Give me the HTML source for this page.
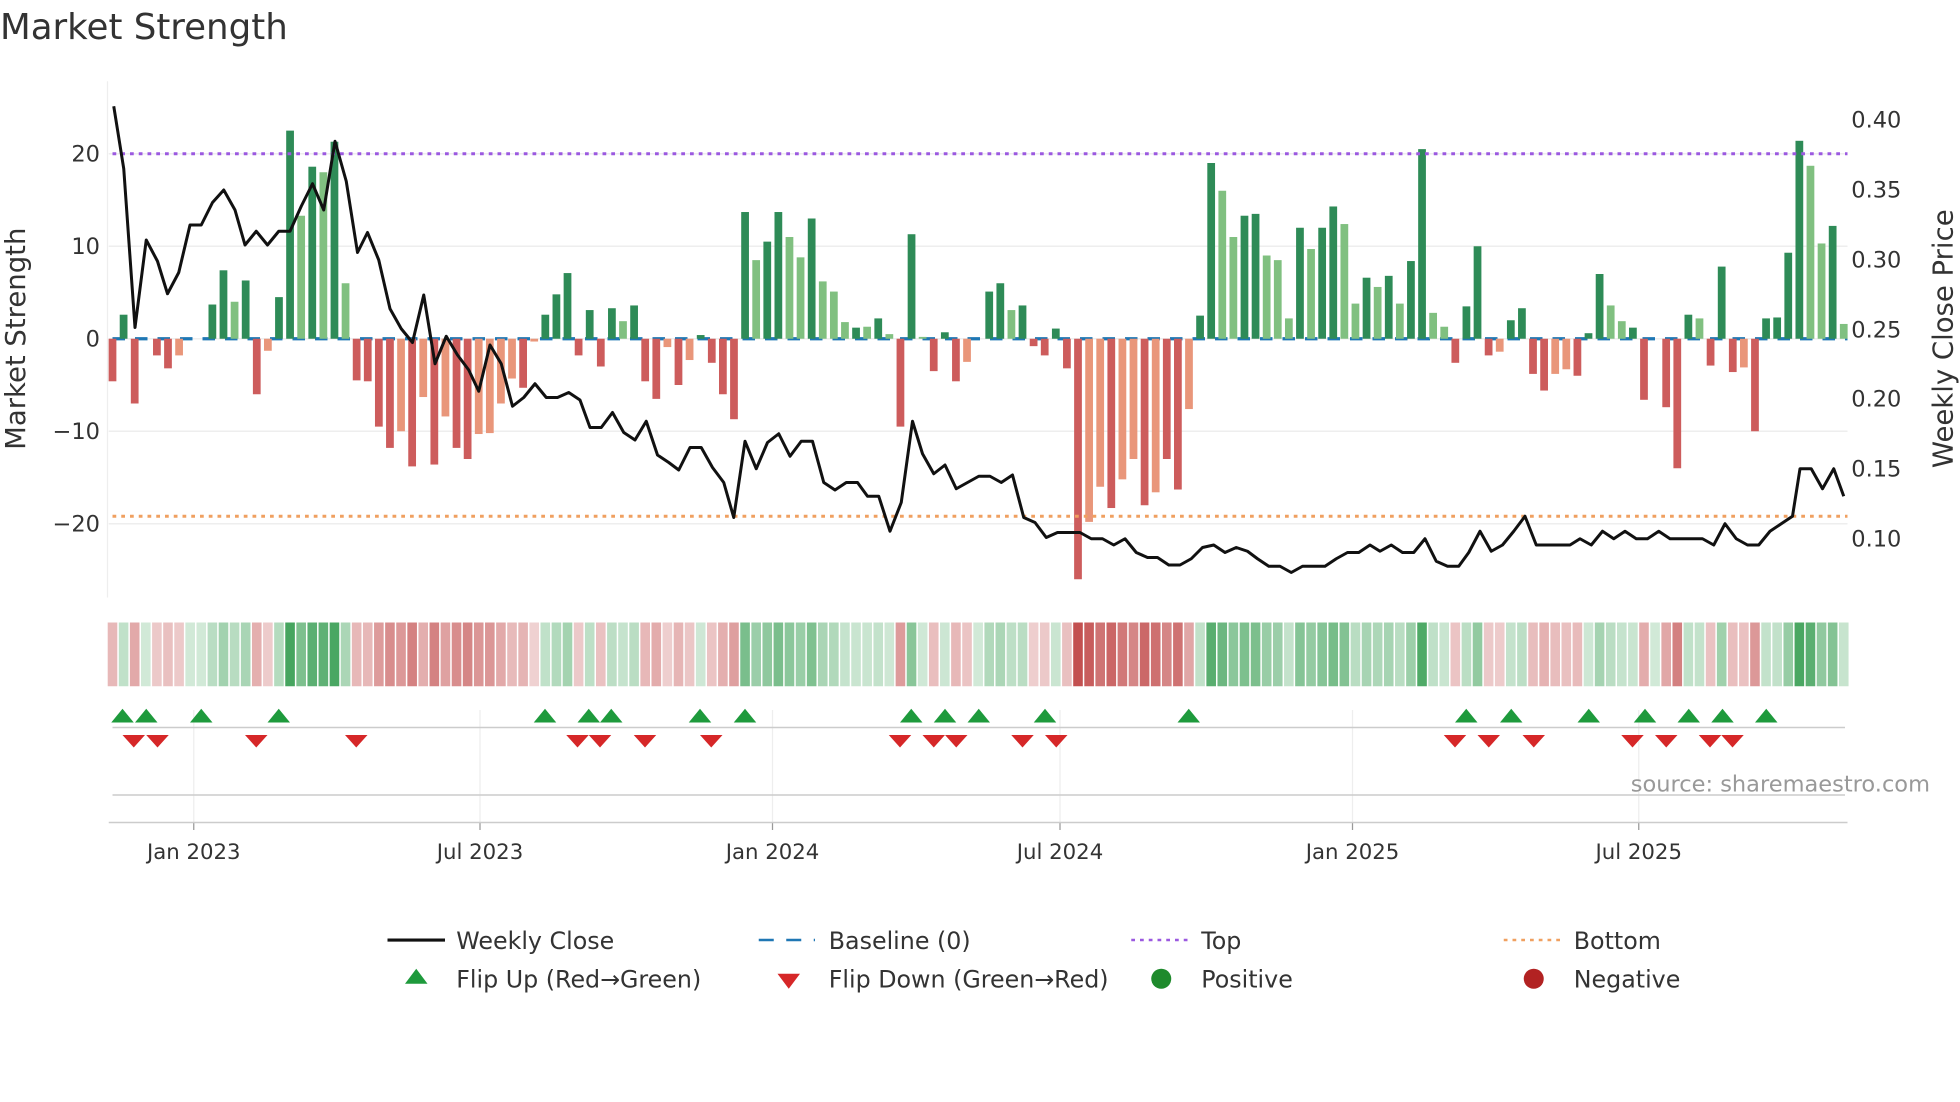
<!DOCTYPE html>
<html><head><meta charset="utf-8"><style>
html,body{margin:0;padding:0;background:#fff;}
svg{display:block;font-family:"DejaVu Sans","Liberation Sans",sans-serif;}
</style></head><body>
<svg id="s" width="1960" height="1102" viewBox="0 0 1568 881.6" xmlns="http://www.w3.org/2000/svg">
<rect width="1568" height="882" fill="#fff"/>
<text x="0" y="31" font-size="28.5" fill="#333">Market Strength</text>
<g id="grid"></g>
<g id="bars"></g>
<g id="rest"></g>
</svg>
<script>
const NS="http://www.w3.org/2000/svg";
function el(p,t,a,txt){const e=document.createElementNS(NS,t);for(const k in a)e.setAttribute(k,a[k]);if(txt!==undefined)e.textContent=txt;p.appendChild(e);return e;}
const S=document.getElementById('s'),G=document.getElementById('grid'),B=document.getElementById('bars'),R=document.getElementById('rest');
const y0=271,k=7.4;
[20,10,0,-10,-20].forEach(v=>{const y=y0-v*k;el(G,'line',{x1:87,x2:1478,y1:y,y2:y,stroke:'#eeeeee','stroke-width':1.2});
 el(G,'text',{x:80,y:y+6,'font-size':18,fill:'#333','text-anchor':'end'},(v<0?'\u2212':'')+Math.abs(v));});
el(G,'line',{x1:86,x2:86,y1:65,y2:478,stroke:'#eee'});
[[0.40,95],[0.35,151],[0.30,207],[0.25,263],[0.20,318],[0.15,374],[0.10,430]].forEach(([v,y])=>el(G,'text',{x:1481,y:y+7,'font-size':18,fill:'#333'},v.toFixed(2)));
el(G,'text',{x:0,y:0,'font-size':22,fill:'#333','text-anchor':'middle',transform:'translate(20,271) rotate(-90)'},'Market Strength');
el(G,'text',{x:0,y:0,'font-size':22,fill:'#333','text-anchor':'middle',transform:'translate(1562,271) rotate(-90)'},'Weekly Close Price');
el(G,'line',{x1:90,x2:1478,y1:y0,y2:y0,stroke:'#1f77b4','stroke-width':2.6,'stroke-dasharray':'10 8'});
const D="R-4.6 G2.6 R-7 Z0 R-1.8 R-3.2 r-1.8 Z0 Z0 G3.7 G7.4 g4 G6.3 R-6 r-1.3 G4.5 G22.5 g13.3 G18.6 g18 G21.3 g6 R-4.5 R-4.6 R-9.5 R-11.8 r-10 R-13.8 r-6.3 R-13.6 r-8.4 R-11.8 R-13 r-10.3 r-10.2 r-7 r-4.3 R-5.3 r-0.3 G2.6 G4.8 G7.1 R-1.8 G3.1 R-3 G3.3 g1.9 G3.6 R-4.6 R-6.5 r-0.9 R-5 r-2.3 G0.4 R-2.6 R-6 R-8.7 G13.7 g8.5 G10.5 G13.7 g11 g8.8 G13 g6.2 g5.1 g1.8 G1.2 g1.3 G2.2 g0.5 R-9.5 G11.3 g0.2 R-3.5 G0.7 R-4.6 r-2.5 Z0 G5.1 G6 g3.1 G3.6 R-0.8 R-1.8 G1.1 R-3.2 R-26 r-19.8 r-16 R-18.3 r-15.2 r-13 R-18 r-16.6 R-13 R-16.3 r-7.6 G2.5 G19 g16 g11 G13.3 G13.5 g9 g8.5 g2.2 G12 g9.7 G12 G14.3 g12.4 g3.8 G6.6 g5.6 G6.8 g3.8 G8.4 G20.5 g2.8 g1.3 R-2.6 G3.5 G10 R-1.8 r-1.4 G2 G3.3 R-3.8 R-5.6 r-3.8 r-3.3 R-4 G0.6 G7 g3.6 g1.9 G1.2 R-6.6 Z0 R-7.4 R-14 G2.6 g2.2 R-2.9 G7.8 R-3.6 r-3.1 R-10 G2.2 G2.3 G9.3 G21.4 g18.7 g10.3 G12.2 g1.6".split(' ');
const col={G:'#2e8b57',g:'#80c080',R:'#cd5c5c',r:'#e9967a'};
const N=D.length,step=(1475-90)/(N-1),bw=6.2;
D.forEach((s,i)=>{const c=s[0],v=parseFloat(s.slice(1));const x=90+i*step;
 if(c!=='Z'&&v!==0){const h=Math.abs(v)*k;el(B,'rect',{x:x-bw/2,y:v>0?y0-h:y0,width:bw,height:h,fill:col[c]});}
 let f;const a=Math.min(Math.abs(v)/22,1);const t=0.25+0.75*a;
 if(v>=0){f=`rgb(${Math.round(255-(255-70)*t)},${Math.round(255-(255-165)*t)},${Math.round(255-(255-95)*t)})`;}
 else{f=`rgb(${Math.round(255-(255-195)*t)},${Math.round(255-(255-80)*t)},${Math.round(255-(255-80)*t)})`;}
 el(B,'rect',{x:x-step/2+0.6,y:498,width:step-1.2,height:51,fill:f});
});
el(R,'line',{x1:90,x2:1478,y1:123,y2:123,stroke:'#9b59e0','stroke-width':2.4,'stroke-dasharray':'3 4'});
el(R,'line',{x1:90,x2:1478,y1:413,y2:413,stroke:'#f0a060','stroke-width':2.4,'stroke-dasharray':'3 4'});
const P="91,85 99,135 108,262 117,192 126,209 134,235 143,218 152,180 161,180 170,162 179,152 188,168 196,196 205,185 214,196 223,185 232,185 241,165 250,147 259,168 268,113 277,145 286,202 294,186 303,208 312,247 321,263 330,274 339,236 348,291 357,269 366,284 375,296 383,313 392,276 401,291 410,325 419,318 428,307 437,318 446,318 455,314 464,320 472,342 481,342 490,330 499,346 508,352 517,337 526,364 535,370 543,376 552,358 561,358 570,374 579,386 587,414 596,353 605,375 614,354 623,347 632,365 641,353 650,353 659,386 668,392 677,386 686,386 694,397 703,397 712,425 721,402 730,337 738,363 747,379 756,372 765,391 774,386 783,381 792,381 801,386 810,380 819,414 828,418 837,430 846,426 855,426 864,426 873,431 882,431 891,436 900,431 909,442 918,446 926,446 935,452 944,452 953,447 962,438 971,436 980,442 989,438 998,441 1006,447 1015,453 1024,453 1033,458 1042,453 1051,453 1060,453 1069,447 1078,442 1087,442 1096,436 1104,441 1113,436 1122,442 1131,442 1140,431 1149,449 1158,453 1167,453 1175,442 1184,425 1193,441 1202,436 1211,425 1220,413 1229,436 1238,436 1247,436 1256,436 1264,431 1273,436 1282,425 1291,431 1300,425 1309,431 1318,431 1327,425 1336,431 1345,431 1354,431 1362,431 1371,436 1380,419 1389,431 1398,436 1407,436 1416,425 1425,419 1434,413 1440,375 1449,375 1458,391 1467,375 1475,397";
el(R,'polyline',{points:P,fill:'none',stroke:'#111','stroke-width':2.4,'stroke-linejoin':'round'});
const ticks=[[155,'Jan 2023'],[384,'Jul 2023'],[618,'Jan 2024'],[848,'Jul 2024'],[1082,'Jan 2025'],[1311,'Jul 2025']];
ticks.forEach(([x,t])=>{el(R,'line',{x1:x,x2:x,y1:568,y2:658,stroke:'#eee'});el(R,'line',{x1:x,x2:x,y1:658,y2:664,stroke:'#999'});
 el(R,'text',{x:x,y:687,'font-size':17,fill:'#333','text-anchor':'middle'},t);});
el(R,'line',{x1:90,x2:1476,y1:582,y2:582,stroke:'#ccc','stroke-width':1.2});
el(R,'line',{x1:90,x2:1476,y1:636,y2:636,stroke:'#ccc','stroke-width':1.2});
el(R,'line',{x1:87,x2:1478,y1:658,y2:658,stroke:'#ccc','stroke-width':1.2});
[98,117,161,223,436,471,489,560,596,729,756,783,836,951,1173,1209,1271,1316,1351,1378,1413].forEach(x=>el(R,'path',{d:`M${x-9},578 L${x+9},578 L${x},567 Z`,fill:'#1e9a3c'}));
[107,126,205,285,462,480,516,569,720,747,765,818,845,1164,1191,1227,1306,1333,1368,1386].forEach(x=>el(R,'path',{d:`M${x-9},588 L${x+9},588 L${x},598 Z`,fill:'#d62728'}));
el(R,'text',{x:1544,y:633,'font-size':18,fill:'#999','text-anchor':'end'},'source: sharemaestro.com');
const L=R;
el(L,'line',{x1:310,x2:356,y1:752,y2:752,stroke:'#111','stroke-width':2.5});
el(L,'line',{x1:607,x2:652,y1:752,y2:752,stroke:'#1f77b4','stroke-width':2,'stroke-dasharray':'12 10'});
el(L,'line',{x1:905,x2:950,y1:752,y2:752,stroke:'#9b59e0','stroke-width':2,'stroke-dasharray':'3 4'});
el(L,'line',{x1:1203,x2:1248,y1:752,y2:752,stroke:'#f0a060','stroke-width':2,'stroke-dasharray':'3 4'});
el(L,'path',{d:'M324,787 L342,787 L333,775 Z',fill:'#1e9a3c'});
el(L,'path',{d:'M622,779 L640,779 L631,791 Z',fill:'#d62728'});
el(L,'circle',{cx:929,cy:783,r:8,fill:'#1e8a2c'});
el(L,'circle',{cx:1227,cy:783,r:8,fill:'#b22222'});
[[365,759,'Weekly Close'],[663,759,'Baseline (0)'],[961,759,'Top'],[1259,759,'Bottom'],[365,790,'Flip Up (Red\u2192Green)'],[663,790,'Flip Down (Green\u2192Red)'],[961,790,'Positive'],[1259,790,'Negative']].forEach(([x,y,t])=>el(L,'text',{x:x,y:y,'font-size':19,fill:'#333'},t));
</script>
</body></html>
